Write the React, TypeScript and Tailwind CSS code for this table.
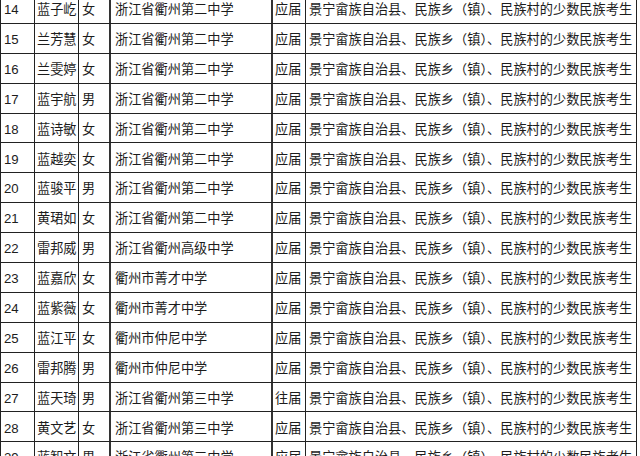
import React from "react";

const rows: [string, string, string, string, string][] = [
  ["14", "蓝子屹", "女", "浙江省衢州第二中学", "应届"],
  ["15", "兰芳慧", "女", "浙江省衢州第二中学", "应届"],
  ["16", "兰雯婷", "女", "浙江省衢州第二中学", "应届"],
  ["17", "蓝宇航", "男", "浙江省衢州第二中学", "应届"],
  ["18", "蓝诗敏", "女", "浙江省衢州第二中学", "应届"],
  ["19", "蓝越奕", "女", "浙江省衢州第二中学", "应届"],
  ["20", "蓝骏平", "男", "浙江省衢州第二中学", "应届"],
  ["21", "黄珺如", "女", "浙江省衢州第二中学", "应届"],
  ["22", "雷邦威", "男", "浙江省衢州高级中学", "应届"],
  ["23", "蓝嘉欣", "女", "衢州市菁才中学", "应届"],
  ["24", "蓝紫薇", "女", "衢州市菁才中学", "应届"],
  ["25", "蓝江平", "女", "衢州市仲尼中学", "应届"],
  ["26", "雷邦腾", "男", "衢州市仲尼中学", "应届"],
  ["27", "蓝天琦", "男", "浙江省衢州第三中学", "往届"],
  ["28", "黄文艺", "女", "浙江省衢州第三中学", "应届"],
  ["29", "蓝智文", "男", "浙江省衢州第三中学", "应届"],
];

const desc = "景宁畲族自治县、民族乡（镇）、民族村的少数民族考生";

export default function App() {
  return (
    <div className="w-[640px] h-[456px] overflow-hidden bg-white">
      <div
        className="mt-[-6px] w-[637px] border-l border-[#222] text-[13.2px] text-[#1c1c1c]"
        style={{ fontFamily: '"Liberation Sans", "Noto Sans CJK SC", sans-serif' }}
      >
        {rows.map((r) => (
          <div key={r[0]} className="flex h-[29.9px] border-b border-[#222]">
            <div className="w-[34px] shrink-0 border-r border-[#222] pl-[3px] pt-[3px] flex items-center">{r[0]}</div>
            <div className="w-[44px] shrink-0 border-r border-[#222] pl-[2px] pt-[3px] flex items-center whitespace-nowrap">{r[1]}</div>
            <div className="w-[32px] shrink-0 border-r-2 border-[#333] pl-[3px] pt-[3px] flex items-center">{r[2]}</div>
            <div className="w-[162px] shrink-0 border-r-2 border-[#333] pl-[4px] pt-[3px] flex items-center whitespace-nowrap">{r[3]}</div>
            <div className="w-[33px] shrink-0 border-r border-[#222] pl-[2px] pt-[3px] flex items-center whitespace-nowrap">{r[4]}</div>
            <div className="w-[331px] shrink-0 border-r border-[#222] pl-[3px] pt-[3px] flex items-center whitespace-nowrap overflow-hidden">{desc}</div>
          </div>
        ))}
      </div>
    </div>
  );
}
